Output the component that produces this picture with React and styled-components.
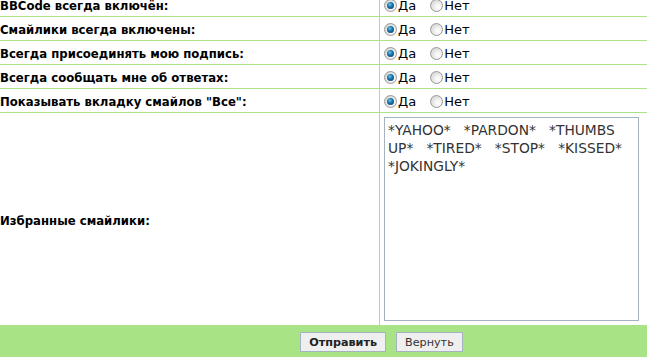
import React from "react";
import styled, { createGlobalStyle } from "styled-components";

const Global = createGlobalStyle`
  html, body { margin: 0; padding: 0; background: #ffffff; overflow: hidden; }
  body { font-family: "DejaVu Sans", Verdana, sans-serif; }
`;

const green = "#a8e486";

const Page = styled.div`
  width: 647px;
  margin-top: -7px;
`;

const Row = styled.div`
  display: grid;
  grid-template-columns: 380px 1fr;
  height: ${(p) => p.$h || 23}px;
  border-bottom: ${(p) => (p.$last ? "none" : `1px solid ${green}`)};
`;

const Label = styled.div`
  display: flex;
  align-items: center;
  padding-top: 3px;
  box-sizing: border-box;
  font-size: 11.7px;
  font-weight: bold;
  color: #000;
  white-space: nowrap;
  border-right: 1px solid ${green};
`;

const Value = styled.div`
  display: flex;
  align-items: ${(p) => (p.$top ? "flex-start" : "center")};
  padding-left: 4px;
  padding-top: ${(p) => (p.$top ? 0 : 2)}px;
  box-sizing: border-box;
  font-size: 13px;
  color: #000;
`;

const Choice = styled.label`
  display: flex;
  align-items: center;
  margin-right: ${(p) => p.$gap || 0}px;
  cursor: default;
`;

const Radio = styled.span`
  width: 13px;
  height: 13px;
  box-sizing: border-box;
  border-radius: 50%;
  border: 1px solid #999;
  background: radial-gradient(circle at 65% 65%, #ffffff 0%, #ececec 45%, #c4c4c4 100%);
  display: flex;
  align-items: center;
  justify-content: center;
  margin-right: 1px;
  flex: none;
  &::after {
    content: "";
    display: ${(p) => (p.$checked ? "block" : "none")};
    width: 7px;
    height: 7px;
    border-radius: 50%;
    background: radial-gradient(circle at 40% 35%, #6cc6ee 0%, #1a76ad 40%, #0a3557 100%);
  }
`;

const Area = styled.textarea`
  display: block;
  box-sizing: border-box;
  width: 255px;
  height: 204px;
  margin: 4px 0 3px 0;
  padding: 3px 3px;
  border: 1px solid #a5b3c1;
  font-family: "DejaVu Sans", Verdana, sans-serif;
  font-size: 13.8px;
  line-height: 18px;
  color: #333;
  resize: none;
  outline: none;
  overflow: hidden;
  white-space: pre-wrap;
`;

const Footer = styled.div`
  background: ${green};
  height: 40px;
  display: flex;
  align-items: flex-start;
  justify-content: center;
  gap: 10px;
  padding: 7px 0 0 116px;
  box-sizing: border-box;
`;

const Button = styled.button`
  height: 20px;
  padding: 0 8px;
  background: #efefef;
  border: 1px solid #a5b3c1;
  border-radius: 0;
  font-family: "DejaVu Sans", Verdana, sans-serif;
  font-size: 11.2px;
  font-weight: ${(p) => (p.$bold ? "bold" : "normal")};
  color: ${(p) => (p.$bold ? "#222" : "#333")};
  cursor: pointer;
`;

const rows = [
  "BBCode всегда включён:",
  "Смайлики всегда включены:",
  "Всегда присоединять мою подпись:",
  "Всегда сообщать мне об ответах:",
  'Показывать вкладку смайлов "Все":',
];

export default function App() {
  return (
    <Page>
      <Global />
      {rows.map((r) => (
        <Row key={r}>
          <Label>{r}</Label>
          <Value>
            <Choice $gap={14}>
              <Radio $checked />Да
            </Choice>
            <Choice>
              <Radio />Нет
            </Choice>
          </Value>
        </Row>
      ))}
      <Row $h={212} $last>
        <Label>Избранные смайлики:</Label>
        <Value $top>
          <Area
            readOnly
            defaultValue={"*YAHOO*   *PARDON*   *THUMBS UP*   *TIRED*   *STOP*   *KISSED*   *JOKINGLY*"}
          />
        </Value>
      </Row>
      <Footer>
        <Button $bold>Отправить</Button>
        <Button>Вернуть</Button>
      </Footer>
    </Page>
  );
}
